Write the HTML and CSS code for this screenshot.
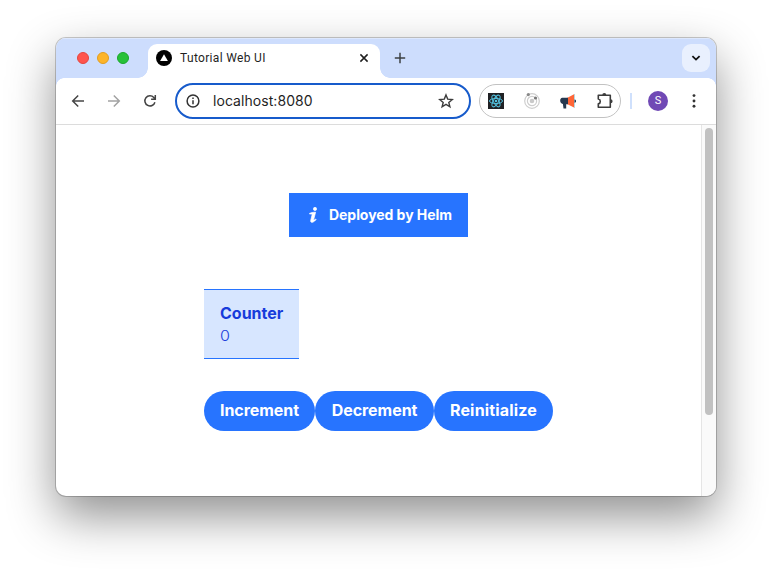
FILE: index.html
```html
<!DOCTYPE html>
<html lang="en">
<head>
<meta charset="utf-8">
<title>Tutorial Web UI</title>
<link rel="stylesheet" href="styles.css">
</head>
<body>
<div class="window">
  <header class="tabstrip">
    <div class="lights"><i class="light red"></i><i class="light yellow"></i><i class="light green"></i></div>
    <div class="tab">
      <svg class="favicon" width="16" height="16" viewBox="0 0 16 16"><circle cx="8" cy="8" r="8"/><path d="M8 4.2 11.9 11H4.1z" fill="#fff"/></svg>
      <span class="tab-title">Tutorial Web UI</span>
      <svg class="tab-close" width="16" height="16" viewBox="0 0 16 16"><path d="m4.400 4.400 7.200 7.200m0-7.200-7.200 7.200" stroke="#1f1f1f" stroke-width="1.500"/></svg>
    </div>
    <svg class="plus" width="16" height="16" viewBox="0 0 16 16"><path d="M8 2.800v10.400M2.800 8h10.400" stroke="#3c4043" stroke-width="1.500"/></svg>
    <div class="tab-search"><svg width="12" height="12" viewBox="0 0 12 12"><path d="m2.400 4.200 3.600 3.400 3.600-3.400" fill="none" stroke="#111" stroke-width="1.800"/></svg></div>
  </header>
  <div class="toolbar">
    <div class="nav">
      <svg width="16" height="16" viewBox="0 0 16 16"><path d="M14 8H2.900m5.300-5.500L2.700 8l5.500 5.500" fill="none" stroke="#474747" stroke-width="1.500"/></svg>
      <svg width="16" height="16" viewBox="0 0 16 16"><path d="M2 8h11.100M7.800 2.500 13.300 8l-5.500 5.500" fill="none" stroke="#a3a3a3" stroke-width="1.500"/></svg>
      <svg width="16" height="16" viewBox="0 0 16 16"><path d="M12.900 9.200A5.100 5.100 0 1 1 11.800 4.500L13.300 6.100M13.300 2v4.200H9.100" fill="none" stroke="#444" stroke-width="1.500"/></svg>
    </div>
    <div class="omnibox">
      <svg width="14" height="14" viewBox="0 0 14 14"><circle cx="7" cy="7" r="5.900" fill="none" stroke="#333" stroke-width="1.500"/><path d="M7 6.300v4M7 3.500v1.500" stroke="#333" stroke-width="1.500"/></svg>
      <span class="url">localhost:8080</span>
      <svg class="star" width="16" height="16" viewBox="0 0 16 16"><path d="m8 1.900 1.700 4.200 4.600.35-3.500 2.950 1.100 4.400L8 11.400l-3.900 2.400 1.100-4.400L1.700 6.450l4.600-.35z" fill="none" stroke="#3c3c3c" stroke-width="1.400"/></svg>
    </div>
    <div class="extensions">
      <svg width="16" height="16" viewBox="0 0 16 16"><path fill="#202124" d="M0 0h16v16H0z"/><g fill="none" stroke="#53c1de" stroke-width="1"><ellipse cx="8" cy="8" rx="6.500" ry="2.600"/><ellipse cx="8" cy="8" rx="6.500" ry="2.600" transform="rotate(60 8 8)"/><ellipse cx="8" cy="8" rx="6.500" ry="2.600" transform="rotate(120 8 8)"/></g><circle cx="8" cy="8" r="1.300" fill="#53c1de"/></svg>
      <svg width="16" height="16" viewBox="0 0 16 16"><g fill="none" stroke="#cecece" stroke-width="1.200"><circle cx="8" cy="8" r="7.300"/><circle cx="8" cy="8" r="4.600"/></g><circle cx="8" cy="8" r="2.300" fill="#c9c9c9"/><circle cx="4.300" cy="1.600" r="1.600" fill="#888"/><circle cx="11.500" cy="5" r="1.600" fill="#777"/></svg>
      <svg width="16" height="16" viewBox="0 0 16 16"><path d="M14.500 1v14" stroke="#b8d8e0"/><path d="M14.500 6.500a1.600 1.600 0 0 1 0 3.200z" fill="#26384f"/><path d="m7 5 7-3.700v13.200L7 11z" fill="#ff6638"/><path d="M2.300 4.700H8v6.500H6.200v4.300H3.500l-.6-4.500C-.5 10.400-.7 5 2.300 4.700" fill="#26384f"/></svg>
      <svg width="18" height="16" viewBox="0 0 18 16"><path d="M2.300 2.300h12v12h-12v-3.400a2.500 2.500 0 0 0 0-4.900z" fill="none" stroke="#3c3c3c" stroke-width="1.600" stroke-linejoin="round"/><path d="M6.300 2a2 2 0 0 1 4 0zM14.600 6.200a2 2 0 0 1 0 4z" fill="#3c3c3c"/></svg>
    </div>
    <i class="divider"></i>
    <div class="avatar">S</div>
    <svg class="menu" width="16" height="16" viewBox="0 0 16 16" fill="#333"><circle cx="8" cy="2.600" r="1.450"/><circle cx="8" cy="8" r="1.450"/><circle cx="8" cy="13.300" r="1.450"/></svg>
  </div>
  <div class="viewport">
    <main class="page">
      <div class="banner">
        <svg width="8" height="16" viewBox="0 0 8 16" fill="#fff" stroke="#fff" stroke-width=".7"><circle cx="6" cy="1.900" r="1.600"/><path d="M.6 6.300C2.100 5.700 3.900 5.200 6.600 5.200L4.700 12.600c-.2.900.7.500 1.900-.6l.5.500C5.100 15.200 1.400 16.800 1.700 13.600L3.100 7.800C3.300 6.900 2.200 6.900.7 7.100z"/></svg>
        <span class="banner-text">Deployed by Helm</span>
      </div>
      <div class="content">
        <section class="counter"><h2>Counter</h2><p>0</p></section>
        <div class="buttons"><button class="inc"><span>Increment</span></button><button class="dec"><span>Decrement</span></button><button class="reset"><span>Reinitialize</span></button></div>
      </div>
    </main>
    <div class="scrollbar"><div class="thumb"></div></div>
  </div>
</div>
</body>
</html>
```
FILE: styles.css
```css
* { box-sizing: border-box; }
body { margin: 0; padding: 38px 56px; height: 570px; overflow: hidden; background: #fff; font-family: Inter, "Liberation Sans", sans-serif; }
svg { display: block; flex: none; }
.window { width: 660px; height: 458px; border-radius: 10px; overflow: hidden; display: flex; flex-direction: column; background: #fff; box-shadow: 0 0 0 1px rgba(0,0,0,.2), 0 20px 48px rgba(0,0,0,.44); }
.tabstrip { height: 40px; flex: none; display: flex; align-items: center; background: #cdddfd; padding: 0 6px 0 21px; box-shadow: inset 0 1px #dde8fe; }
.lights { display: flex; gap: 8px; width: 71px; }
.light { width: 12px; height: 12px; border-radius: 50%; border: 1px solid; }
.red { background: #ff544d; border-color: #e4453f; }
.yellow { background: #fdb429; border-color: #e19d20; }
.green { background: #27c138; border-color: #1ba72b; }
.tab { position: relative; width: 232px; height: 34px; align-self: flex-end; padding: 0 8px 6px; display: flex; align-items: center; background: #fff; border-radius: 9px 9px 0 0; }
.tab::before, .tab::after { content: ""; position: absolute; bottom: 0; width: 10px; height: 10px; }
.tab::before { left: -10px; background: radial-gradient(circle at 0 0, transparent 9.5px, #fff 10px); }
.tab::after { right: -10px; background: radial-gradient(circle at 100% 0, transparent 9.5px, #fff 10px); }
.tab-title { font: 12px/16px Roboto, sans-serif; color: #1f1f1f; margin-left: 8px; letter-spacing: .33px; }
.tab-close { margin-left: auto; }
.plus { margin-left: 12px; }
.tab-search { width: 28px; height: 28px; margin-left: auto; border-radius: 9px; background: #e9f0fe; display: grid; place-items: center; }
.toolbar { height: 47px; flex: none; display: flex; align-items: center; border-bottom: 1px solid #dcdcdc; background: radial-gradient(circle at 8px 8px, #fff 7.5px, #cdddfd 8px) 0 0 / 8px 8px no-repeat, radial-gradient(circle at 0 8px, #fff 7.5px, #cdddfd 8px) 100% 0 / 8px 8px no-repeat, #fff; padding-left: 14px; }
.nav { display: flex; gap: 20px; width: 105px; }
.omnibox { width: 296px; height: 36px; border: 2px solid #175bcb; border-radius: 18px; display: flex; align-items: center; padding: 0 15px 0 9px; }
.url { font: 14px/18px Inter, sans-serif; color: #1f1f1f; margin-left: 13px; letter-spacing: .06px; }
.star { margin-left: auto; }
.extensions { width: 142px; height: 34px; margin-left: 8px; border: 1px solid #c2c2c2; border-radius: 17px; display: flex; align-items: center; gap: 20px; padding-left: 8px; }
.divider { width: 2px; height: 16px; background: #cfe0fc; margin-left: 9px; }
.avatar { width: 20px; height: 20px; margin-left: 16px; border-radius: 50%; background: #7049b5; color: #fff; font: 11px/20px Roboto, sans-serif; text-align: center; }
.menu { margin-left: 18px; }
.viewport { flex: 1; display: flex; }
.page { width: 645px; display: flex; flex-direction: column; align-items: center; padding-top: 68px; }
.banner { width: 179px; height: 44px; background: #2774ff; color: #fff; display: flex; align-items: center; padding-left: 20px; }
.banner-text { font-weight: 700; font-size: 14px; line-height: 20px; margin-left: 12px; white-space: nowrap; letter-spacing: -.05px; }
.content { width: 349px; margin-top: 52px; }
.counter { width: 95px; height: 70px; background: #d7e6ff; border: solid #2774ff; border-width: 1px 0; padding: 11px 16px; color: #173bdb; }
.counter h2 { margin: 0; font-size: 16px; line-height: 24px; font-weight: 700; letter-spacing: 0; }
.counter p { margin: 0; font-size: 14px; font-weight: 300; line-height: 22px; transform: scaleX(1.15); transform-origin: 0 50%; }
.buttons { display: flex; margin-top: 32px; }
.buttons button { width: 119px; height: 40px; border: 0; border-radius: 20px; padding: 0 0 2px; background: #2774ff; color: #fff; font: 700 16px/24px Inter, sans-serif; white-space: nowrap; letter-spacing: -.04px; }
.buttons .inc { width: 111px; }
.buttons .reset { letter-spacing: .18px; }
.scrollbar { width: 15px; background: #fafafa; border-left: 1px solid #e5e5e5; padding: 3px 0 0 3px; }
.thumb { width: 8px; height: 287px; border-radius: 4px; background: #c1c1c1; }
```
